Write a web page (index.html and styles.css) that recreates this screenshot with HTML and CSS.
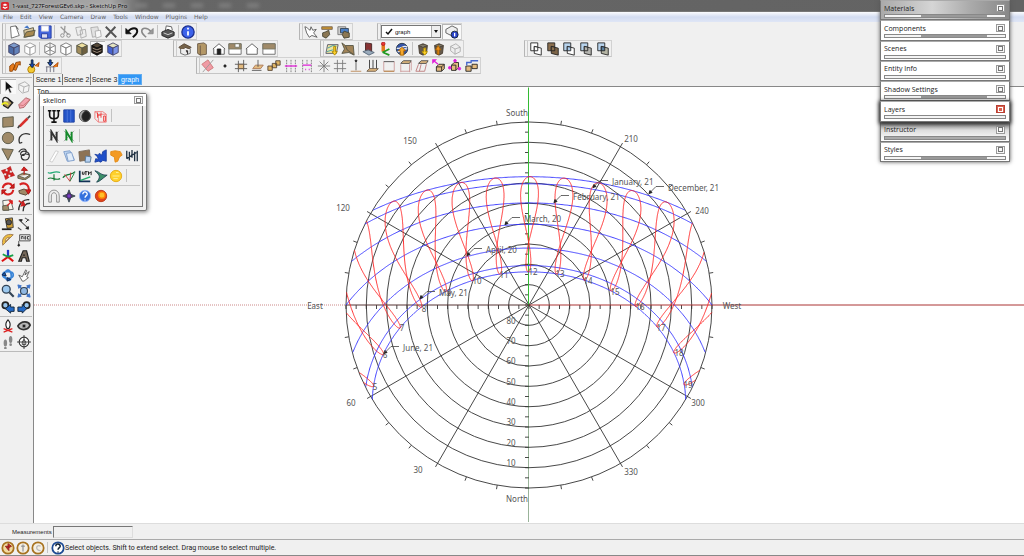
FILE: index.html
```html
<!DOCTYPE html>
<html lang="en">
<head>
<meta charset="utf-8">
<title>1-vast_727ForestGEv6.skp - SketchUp Pro</title>
<link rel="stylesheet" href="styles.css">
</head>
<body>
<div class="app">
  <header class="titlebar">
    <svg class="logo" viewBox="0 0 16 16"><rect width="16" height="16" rx="3" fill="#d8272c"/><path d="M3 6l5-3 5 3-5 2zM5 9l3 2 5-2v2l-5 3-5-3z" fill="#fff"/></svg>
    <h1>1-vast_727ForestGEv6.skp - SketchUp Pro</h1>
    <span class="smudge"></span><span class="smudge"></span><span class="smudge"></span><span class="smudge"></span><span class="smudge"></span>
  </header>
  <nav class="menu">
    <button>File</button><button>Edit</button><button>View</button><button>Camera</button><button>Draw</button><button>Tools</button><button>Window</button><button>Plugins</button><button>Help</button>
  </nav>
  <div class="toolbars">
    <div class="row">
      <div class="bar w-195" data-tools="new open save | cut copy paste delete | undo redo | print | info"></div>
      <div class="bar after-102 w-54" data-tools="hand paintcomp swapcomp"></div>
      <div class="bar after-24 layerbar w-85">
        <div class="combo">
          <svg class="tick" viewBox="0 0 13 11"><path d="M4 6l2 2 4-5" fill="none" stroke="#111" stroke-width="1.500"/></svg>
          <select aria-label="Layer"><option>graph</option></select>
          <span class="drop"></span>
        </div>
        <div class="tools" data-tools="layerinfo*"></div>
      </div>
    </div>
    <div class="row">
      <div class="bar w-120" data-tools="xray backedge | wire hidden shaded textured* mono"></div>
      <div class="bar after-51 w-105" data-tools="iso top front right back left"></div>
      <div class="bar after-42 w-144" data-tools="addloc terrain | photo street earth | getmodel sharemodel sharecomp"></div>
      <div class="bar after-60 w-88" data-tools="outer intersect union subtract trim"></div>
    </div>
    <div class="row">
      <div class="bar w-60" data-tools="plugA plugB plugC"></div>
      <div class="bar after-138 w-285" data-tools="erase dot cross plane boxes dashes dims star hash pin pins frame cage slant boxarrow boxdots steps"></div>
    </div>
  </div>
  <div class="middle">
    <aside class="side">
      <div class="pair" data-tools="select* component bucket rubber"></div>
      <div class="pair" data-tools="rect pencil circle arc poly freehand"></div>
      <div class="pair" data-tools="move push rotate follow scale offset"></div>
      <div class="pair" data-tools="tape dimension protractor textlabel axes text3d"></div>
      <div class="pair" data-tools="orbit pan zoom extents prev next"></div>
      <div class="pair" data-tools="camera look walk section"></div>
    </aside>
    <div class="work">
      <nav class="tabs">
        <button>Scene 1</button><button>Scene 2</button><button>Scene 3</button><button class="active">graph</button>
      </nav>
      <main class="canvas">
        <span class="viewname">Top</span>
        <svg class="chart" id="chart" viewBox="34 88 990 435" role="img" aria-label="Sun path diagram"></svg>
        <section class="palette skelion">
          <div class="ptitle"><h2>skelion</h2><button class="close" aria-label="Close"></button></div>
          <div class="grid">
            <div class="line" data-tools="psi panel moon hd |"></div>
            <div class="line" data-tools="north northg |"></div>
            <div class="line" data-tools="blank sheets roof mapblue africa bars"></div>
            <div class="line" data-tools="wave profile utm wing sun |"></div>
            <div class="line" data-tools="arch compass help firefox"></div>
          </div>
        </section>
      </main>
    </div>
  </div>
  <div class="measure">
    <label for="vcb">Measurements</label><input id="vcb" type="text">
  </div>
  <footer class="status">
    <div class="tools" data-tools="geo credit claim | helpring"></div>
    <span>Select objects. Shift to extend select. Drag mouse to select multiple.</span>
  </footer>
</div>
<div class="trays">
  <section class="tray glass"><h2>Materials</h2><button class="close" aria-label="Close Materials"></button><div class="slot part"></div></section>
  <section class="tray"><h2>Components</h2><button class="close" aria-label="Close Components"></button><div class="slot part"></div></section>
  <section class="tray"><h2>Scenes</h2><button class="close" aria-label="Close Scenes"></button><div class="slot"></div></section>
  <section class="tray"><h2>Entity Info</h2><button class="close" aria-label="Close Entity Info"></button><div class="slot"></div></section>
  <section class="tray"><h2>Shadow Settings</h2><button class="close" aria-label="Close Shadow Settings"></button><div class="slot part"></div></section>
  <section class="tray current"><h2>Layers</h2><button class="close" aria-label="Close Layers"></button><div class="slot"></div></section>
  <section class="tray shaded"><h2>Instructor</h2><button class="close" aria-label="Close Instructor"></button><div class="slot full"></div></section>
  <section class="tray"><h2>Styles</h2><button class="close" aria-label="Close Styles"></button><div class="slot part"></div></section>
</div>
<script src="app.js"></script>
</body>
</html>
```
FILE: styles.css
```css
* { box-sizing: border-box; }
html, body { height: 100%; }
body { margin: 0; font-family: "Open Sans", "Noto Sans", sans-serif; font-size: 6px; color: #222; overflow: hidden; }
h1, h2 { margin: 0; font-weight: 400; }
button { margin: 0; padding: 0; border: 0; background: none; font: inherit; color: inherit; }
.app { display: flex; flex-direction: column; height: 100%; background: #f0f0f0; }

.titlebar { display: flex; align-items: center; height: 12px; padding-left: 1px; background: linear-gradient(90deg, #999 0, #a6a6a6 110px, #666 142px, #636363); border-bottom: 1px solid #777; }
.titlebar h1 { margin: 0 8px 0 3px; font-size: 6px; line-height: 10px; color: #000; white-space: nowrap; text-shadow: 0 0 3px #ddd; }
.logo { width: 8px; height: 8px; }
.smudge { width: 12px; height: 3px; margin-right: 16px; background: #8b8b8b; filter: blur(2px); }
.menu { display: flex; gap: 7px; height: 10px; padding-left: 3px; background: linear-gradient(#fbfcfe, #d3dcf1 50%, #dfe6f6); color: #636363; font-family: "DejaVu Sans", sans-serif; font-size: 6px; line-height: 10px; }

.toolbars { padding: 1px 0 0 2px; }
.row { display: flex; height: 17px; }
.bar { display: flex; align-items: center; height: 17px; padding-left: 3px; border: 1px solid #d2d2d2; border-left-color: #b5b5b5; border-bottom-color: #c5c5c5; box-shadow: inset 2px 0 #f0f0f0, inset 3px 0 #ccc; }
.w-54 { width: 54px; } .w-60 { width: 60px; } .w-85 { width: 85px; } .w-88 { width: 88px; }
.w-105 { width: 105px; } .w-120 { width: 120px; } .w-144 { width: 144px; } .w-195 { width: 195px; } .w-285 { width: 285px; }
.after-24 { margin-left: 24px; } .after-42 { margin-left: 42px; } .after-51 { margin-left: 51px; }
.after-60 { margin-left: 60px; } .after-102 { margin-left: 102px; } .after-138 { margin-left: 134px; }
.tool { display: flex; flex: 1 1 0; align-items: center; justify-content: center; height: 15px; }
.tool svg { width: 14px; height: 14px; flex: none; }
.tool.on { background: #f9f9f9; box-shadow: inset 1px 1px #b5b5b5; }
.sep { width: 1px; height: 13px; margin: 0 2px; background: #c3c3c3; }
.combo { display: flex; align-items: center; width: 60px; height: 13px; border: 1px solid #777; background: #fff; }
.tick { width: 13px; height: 11px; }
.combo select { flex: 1; height: 11px; padding: 0; border: 0; appearance: none; background: #fff; font: 6px "Liberation Sans", sans-serif; color: #111; }
.drop { width: 9px; height: 11px; background: #eee; border-left: 1px solid #aaa; display: grid; place-items: center; }
.drop::after { content: ""; border: 2px solid transparent; border-top: 3px solid #111; border-bottom: 0; }
.layerbar .tools { display: flex; flex: 1; margin-left: 1px; }

.middle { display: flex; flex: 1; min-height: 0; }
.side { width: 34px; padding-top: 3px; border-right: 1px solid #888; }
.pair { display: grid; grid-template-columns: 16px 16px; grid-auto-rows: 16px; padding: 1px 0; margin-right: 1px; border-bottom: 1px solid #bbb; }
.side .pair:first-child { border-top: 1px solid #bbb; }
.work { display: flex; flex: 1; flex-direction: column; min-width: 0; }
.tabs { display: flex; height: 12px; padding-left: 1px; font: 7px "Liberation Sans", sans-serif; }
.tabs button { width: 28px; height: 11px; border-right: 1px solid #777; line-height: 10px; }
.tabs .active { width: 24px; margin-left: -1px; background: #3297f5; border: 1px solid #62acf0; color: #fff; line-height: 8px; }
.canvas { position: relative; flex: 1; min-height: 0; background: #fff; border-top: 1px solid #888; }
.chart { display: block; width: 100%; height: 100%; }
.chart text { font: 8px "Noto Sans", sans-serif; fill: #555; text-anchor: middle; dominant-baseline: central; }
.chart .note { text-anchor: start; }
.viewname { position: absolute; left: 3px; top: 0; font: 7px "Noto Sans", sans-serif; }

.palette { position: absolute; left: 5px; top: 6px; width: 108px; background: #f0f0f0; border: 1px solid #777; border-radius: 2px; box-shadow: 1px 1px 4px #777; padding: 0 3px 3px; }
.ptitle { display: flex; align-items: center; justify-content: space-between; height: 12px; margin: 0 -3px; padding: 0 3px; background: #fff; }
.palette h2, .tray h2 { font-size: 7px; line-height: 11px; }
.close { width: 9px; height: 8px; border: 1px solid #9a9a9a; background: #f8f8f8; display: grid; place-items: center; }
.close::after { content: ""; width: 3px; height: 3px; border: 1px solid #777; }
.grid { border: 1px solid #777; border-top-width: 0; padding: 0 2px; }
.line { display: grid; grid-template-columns: repeat(6, 1fr); align-items: center; height: 20px; border-bottom: 1px solid #c5c5c5; }
.line:last-child { border: 0; }
.palette .tool svg { width: 14px; height: 14px; }

.measure { display: flex; align-items: center; height: 17px; padding-left: 12px; border-bottom: 1px solid #aaa; border-top: 1px solid #ddd; }
.measure label { width: 41px; font-family: "Liberation Sans", sans-serif; }
.measure input { width: 80px; height: 12px; padding: 0; border: 1px solid #ddd; border-top: 1px solid #777; border-left: 1px solid #777; background: #f0f0f0; font-size: 6px; }
.status { display: flex; align-items: center; height: 16px; border-bottom: 1px solid #888; }
.status .tools { display: flex; width: 65px; align-items: center; }
.status span { font: 7px Roboto, sans-serif; }
.status .sep { height: 11px; }

.trays { position: absolute; top: 0; right: 14px; width: 130px; height: 162px; display: flex; flex-direction: column; box-shadow: 0 0 4px #555; }
.tray { display: grid; flex: 1; min-height: 0; grid-template-columns: 1fr 10px; grid-template-rows: 12px 4px; align-content: center; align-items: center; padding: 0 3px; background: #fff; border: 1px solid #777; border-top-color: #aaa; }
.slot { grid-column: 1 / 3; height: 4px; border: 1px solid #888; background: #f4f4f4; }
.part { background: linear-gradient(90deg, #f4f4f4 30%, #999 30%, #999 85%, #f4f4f4 85%); }
.full { background: #aaa; }
.glass { background: linear-gradient(90deg, #aaa, #d5d5d5 40%, #aaa 70%, #888); }
.shaded { background: linear-gradient(#888, #ddd 40%, #fff); }
.current { z-index: 1; box-shadow: 0 1px 4px 1px #222; }
.current .close { background: #d9614f; border-color: #b94034; }
.current .close::after { border-color: #fff; }
```
FILE: app.js
```javascript
const T = '#a08a68', K = '#222', B = '#3f74c8', M = '#e020d8';
const p = (d, fill = 'none', stroke = K, w = 1) => `<path d="${d}" fill="${fill}" stroke="${stroke}" stroke-width="${w}"/>`;
const c = (x, y, r, fill = 'none', stroke = K, w = 1) => `<circle cx="${x}" cy="${y}" r="${r}" fill="${fill}" stroke="${stroke}" stroke-width="${w}"/>`;
const cube = (top, left, right, s = K) => p('M8 1l6 3-6 3-6-3z', top, s) + p('M2 4l6 3v8l-6-3z', left, s) + p('M14 4l-6 3v8l6-3z', right, s);
const house = (w, r) => p('M2 7v7h12V7', w, '#555') + p('M1 8l7-6 7 6', r, '#555');
const lens = '<circle cx="6" cy="6" r="4.5" fill="#9cc8ee" stroke="#345" stroke-width="1.5"/>' + p('M9.5 9.5l5 5', 'none', '#345', 2.5);
const solids = (a, b, m) => p('M2 1h8v9H2z', a) + p('M6 5l8 2v8l-8-2z', b) + p('M6 5l4 1v4H6z', m);
const cup = (y) => p('M3 4l5-2 5 2-1 9-4 2-4-2z', '#66594a', '#443a30') + p('M3 4l5 2 5-2', '#998', '#443a30') + y;
const star = 'M8 0l3 4H9v3h3V5l4 3-4 3V9H9v3h2l-3 4-3-4h2V9H4v2L0 8l4-3v2h3V4H5z';

const ICONS = {
  new: p('M4 2l6-1 4 11-9 3z', '#fff', '#666') + p('M10 1l3 4', 'none', '#444'),
  open: p('M2 6l11-3 1 9-11 2z', '#d9c7a0', '#554') + p('M2 14l3-6 10-2-2 6z', '#a8894f', '#554') + p('M3 3l3-2 2 3', B, B),
  save: p('M1 1h14v14H3l-2-2z', '#4466dd', '#2038a0') + p('M4 1h8v6H4z', '#fff', '#ccd') + p('M4 10h7v5H4z', '#dde', '#2038a0'),
  cut: p('M3 2l9 9M8 1l-1 9', 'none', '#999', 1.5) + c(5, 12, 2, 'none', '#888') + c(12, 12, 2, 'none', '#888'),
  copy: p('M2 3l6-1 2 8-6 2zM7 6l6-1 1 8-6 2z', '#eee', '#aaa'),
  paste: p('M2 3l8-1 2 10-8 2z', '#e2e2e2', '#aaa') + p('M7 7l6-1 1 7-6 2z', '#f8f8f8', '#aaa'),
  delete: p('M2 2l12 12M13 2L2 14', 'none', '#555', 2.2),
  undo: p('M3 8c5-6 11-5 11-1 0 3-3 5-5 7', 'none', '#111', 2.2) + p('M1 4v6h6z', '#111', '#111'),
  redo: p('M13 8c-5-6-11-5-11-1 0 3 3 5 5 7', 'none', '#888', 1.8) + p('M15 4v6H9z', '#999', '#888'),
  print: p('M5 6l1-5 6 1 1 4', '#fff', '#555') + p('M1 8l7-3 7 3v4l-7 3-7-3z', '#555', '#222') + p('M3 9l5 2 5-2', 'none', '#ddd'),
  info: c(8, 8, 7, '#3d62ea', '#1b2f90', 1.5) + p('M8 7v5M8 3v2', 'none', '#fff', 2),
  hand: p('M1 2c2 0 4 3 6 4L8 2l2 4 4-1-3 4 4 5-6-2-3 2-3-5z', '#fff', '#555'),
  paintcomp: p('M2 2h12v3H2z', '#c5912f', '#765') + p('M10 6l-4 2-3 1v4l4 2 4-4z', '#8b7753', '#443'),
  swapcomp: p('M1 2h9v9H1z', '#ccc', '#777') + p('M4 4h9v5H4z', '#4a7fc6', '#345') + p('M8 7l6 2v5l-6 1-2-4z', '#8b7753', '#443'),
  layerinfo: p('M1 5l7-4 6 3v4l-7 4-6-3z', '#eee', '#555') + c(11, 11, 4, '#2b45cc', '#123') + p('M11 9v4', 'none', '#fff', 1.5),
  xray: cube('#7d9bcc', '#4d6da8', '#6383bb', '#446'), backedge: cube('#fff', '#fff', '#fff', '#999'),
  wire: p('M8 1l6 3v8l-6 3-6-3V4zM2 4l6 3 6-3M8 7v8M8 1v8M2 12l6-3 6 3', '#fff', '#777'),
  hidden: cube('#fff', '#fff', '#fff', '#777'), shaded: cube('#eee0a0', '#a08c5c', '#6e6040', '#554'),
  textured: cube('#554838', '#221a12', '#221a12', '#111') + p('M3 7l5 2 5-2M3 10l5 2 5-2', 'none', '#a98', 1),
  mono: cube('#e3e3c0', '#4562d0', '#7c94e8', '#446'),
  iso: p('M1 6l6-4 8 4-2 2-5-2-3 4z', '#76644b', '#543') + p('M3 8v5l5 2 6-2V8', '#eee', '#666') + p('M9 10h2v4', '#433'),
  top: p('M3 2l7-1 3 2v11l-7 1-3-2z', '#b39766', '#654') + p('M6 4v11', 'none', '#654'),
  front: house('#fff', '#fff') + p('M6 14V8h4v6z', '#222'), right: p('M1 2h14v12H1z', '#fff', '#666') + p('M1 2h14v6H1z', T, '#776') + p('M8 2h5v4H8z', '#fff', '#776'),
  back: house('#fff', '#fff'), left: p('M1 2h14v12H1z', '#fff', '#666') + p('M1 2h14v6H1z', T, '#776'),
  addloc: p('M3 3h12l-2 10H1z', '#eee4a0', '#556') + p('M3 7l6-3 4 1M2 11l7-2', 'none', '#39a') + p('M10 5v6h-2l3 4 3-4h-2V5z', '#ffd02a', '#a80'),
  terrain: p('M1 1l4 3 9 0 1 11-6-3-8 1 3-5z', '#a08358', '#554') + p('M5 4l2 5 7 5', 'none', '#554'),
  photo: p('M4 1l7 1v9l-7-1z', '#833', '#422') + p('M1 11l6-2 7 3-6 3z', '#9ab', '#567'), street: p('M6 2v9', 'none', '#e27a1c', 4) + p('M6 12l7 3M5 12l8-4', 'none', '#292', 2) + c(6, 2, 2, '#e33', '#a22'),
  earth: c(8, 8, 6.5, '#3554a8', '#234') + p('M2 7c5 2 8-5 12-1M3 11c5 1 6-5 11-3', 'none', '#eee', 1.5) + p('M6 15v-5H4l4-4 4 4h-2v5z', '#f6a72a', '#a60'),
  getmodel: cup(p('M9 7v4H7l3 4 3-4h-2V7z', '#ffd02a', '#b90')), sharemodel: cup(p('M6 14V9H4l3-5 3 5H8v5z', '#f0921f', '#a60')), sharecomp: p('M3 5l6-3 5 4v5l-6 3-5-4zM3 5l5 3 6-2M8 8v6', '#eee', '#aaa'),
  outer: solids('#fff', '#fff', '#fff'), intersect: solids('#8b6f4e', '#7d6548', '#8b6f4e'), union: solids('#b8d4ee', '#fff', '#a8c9e8'), subtract: solids('#b8d4ee', '#b5b5b0', '#b5b5b0'), trim: solids('#b8d4ee', '#b5b5a5', '#5a7fa0'),
  plugA: p('M2 8l4-3 2 3-3 6H2zM9 4l5-1v4l-2-1-3 7-3-1z', '#e87b1c', '#8c4408'),
  plugB: c(6, 12, 4, '#f3ca34', '#a70') + p('M6 1v5H4l3 4 3-4H8V1z', '#1848b8', '#123') + p('M10 8l5-4-1 5', '#e87b1c', '#a40'), plugC: p('M2 15V9M6 15V9M10 15V9M1 9h11', 'none', '#667') + p('M5 1v3H3l3 4 3-4H7V1z', '#1848b8', '#123') + p('M9 9l6-5-1 5', '#e87b1c', '#a40'),
  erase: p('M1 6l7-5 6 9-6 4z', '#f09aa4', '#c77') + p('M2 15L14 1', 'none', '#999'), dot: c(8, 8, 1.3, K),
  cross: p('M1 6h14M1 11h14M5 2v13M11 1v13', 'none', '#555') + p('M5 6h6v5H5z', '#e3bb80', '#654'), plane: p('M2 11l3-4h9l-3 4z', '#e3bb80', '#a75') + p('M8 1v8M1 13h11', 'none', '#555'),
  boxes: p('M1 8h5v5H1zM6 5h5v5H6zM10 2h5v5h-5z', '#e0b565', '#543'), dashes: p('M3 1v14M8 1v14M13 1v14', 'none', '#777').replace('/>', ' stroke-dasharray="2 1"/>') + p('M1 8h14', 'none', M, 1.5),
  dims: p('M3 1v14M8 1v6M13 1v14', 'none', '#777').replace('/>', ' stroke-dasharray="2 1"/>') + p('M3 7h10M6 12h1M10 12h1', 'none', M, 1.5), star: p('M8 1v14M1 8h14M3 3l10 10M13 3L3 13', 'none', '#777'),
  hash: p('M5 1v14M11 1v14M1 5h14M1 11h14', 'none', '#777'), pin: p('M8 2v11', 'none', '#555') + c(8, 2, 1, K) + p('M2 14h12', 'none', '#b85'),
  pins: p('M4 1v10M8 1v10M12 1v10', 'none', '#333') + p('M1 14l3-3h10l-3 3z', '#e3bb80', '#654'), frame: p('M2 3v11M14 3v11', 'none', '#c99') + p('M2 3h12', 'none', '#444') + p('M2 14h12', 'none', '#b85', 1.5),
  cage: p('M2 5l3-3h9l-2 3z', '#e3bb80', '#444') + p('M2 6v9M12 6v9M14 3v10M2 14h11', 'none', '#c99'), slant: p('M4 5l3-3h8l-2 3H4z', '#e3bb80', '#444') + p('M4 6L1 14h10l2-8M7 6l-2 8', 'none', '#b77'),
  boxarrow: p('M5 9l3-3h6v5l-3 3H5z', '#e3bb80') + p('M5 9h6v5M11 9l3-3', 'none') + p('M2 2l5 4M1 4V1h3z', M, M, 1.5), boxdots: p('M4 7l3-3h5v6l-3 3H4z', '#e3bb80') + c(8, 2, 1.5, M, M) + c(2, 10, 1.5, M, M) + c(13, 11, 1.5, M, M) + p('M4 7h5v6', 'none'),
  steps: p('M1 8h6v6H1zM8 6h6v5H8z', '#e3bb80') + p('M2 7V4h5V2h8', 'none', '#46c', 1.5),
  select: p('M5 1v12l3-3 2 5 2-1-2-5h4z', '#111', '#eee', .7), component: p('M2 5l7-3 5 4-1 7-7 2-4-4zM2 5l6 3 6-2M8 8l-1 6', '#f4f4f4', '#aaa'),
  bucket: p('M2 6l6-3 5 5-5 6-5-3z', '#b39a60', '#222', 1.5) + p('M2 6c0-7 6-5 8 0M9 4l5 4', '#eee', '#222', 1.5) + p('M1 10c2-3 6-3 7 0', 'none', '#ee2', 2), rubber: p('M2 10l8-8 5 2-7 9-5 1z', '#f4a4b0', '#a66') + p('M2 10l5 1 8-7', 'none', '#c77'),
  rect: p('M2 3l12-1v11L2 14z', T, '#554'), pencil: p('M3 13L12 4', 'none', '#d8302c', 3) + p('M12 4l3-3M1 15l2-3', 'none', '#444', 2), circle: c(8, 8, 6.5, T, '#554'),
  arc: p('M3 14C0 5 8 1 15 4M3 14l3-1', 'none', '#333', 1.5), poly: p('M1 2l13 1-6 12z', T, '#554'), freehand: p('M2 6c3-6 11-4 8 1s-8 2-5-1 10 0 9 5-8 5-9 1 5-5 9-3', 'none', '#333', 1.3),
  move: `<g transform="rotate(20 8 8)">${p(star, '#d62222', '#a11', .6)}</g>`, push: p('M1 11l6-3 8 2-6 4zM1 11v3l8 2 6-4v-2', T, '#554') + p('M8 10V5H5l3-4 4 4H9', '#d62222', '#a11'),
  rotate: p('M2 7c1-6 9-7 11-2M14 9c-1 6-9 7-11 2', 'none', '#d62222', 2.4) + p('M15 2v5h-5zM1 14V9h5z', '#d62222', '#a11'), follow: p('M2 10l6-2 7 3-5 4-7-2z', T, '#543') + p('M3 3c7-4 12 2 10 8', 'none', '#d62222', 2.4) + p('M10 9h6l-3 5z', '#d62222', '#a11'),
  scale: p('M2 3l9-1 3 11-11 1z', '#f7f4ec', '#555') + p('M2 9l6-1 1 6H2z', T, '#554') + p('M7 9l5-5', 'none', '#d62222', 1.5) + p('M9 3h4v4z', '#d62222', '#d22'), offset: p('M2 14C2 6 8 1 14 2M7 15c0-6 3-9 8-9', 'none', '#333', 1.6) + p('M5 9l4-1-2-4zM2 3l5 4', '#d62222', '#c22', 1.5),
  tape: p('M5 2l8-1 1 11-7 1z', '#d0a037', '#333') + c(9, 6, 3, '#555') + p('M1 14h11', 'none', '#222', 2), dimension: p('M2 3l11 10M1 12l4 3M9 1l5 3', 'none', '#555', 1.2) + p('M3 3l3 0-1 2zM13 11v3l-3-1zM10 6l3-3', K),
  protractor: p('M2 14C0 5 6 0 14 2z', '#edbd3f', '#975') + p('M5 10c0-4 2-5 5-5z', '#fff6d5', '#975'), textlabel: p('M3 2h12v7H3zM2 9v5', '#eee', '#444') + p('M5 4v3M5 4h2v3M9 4v3h1V4zM14 4h-2v3h2', 'none', '#333') + c(2, 14, 1, K),
  axes: p('M8 9V1', 'none', '#2238c5', 2.6) + p('M8 9l-7 5M8 9l6 5', 'none', '#d11', 2.4) + p('M8 9L2 6M8 9l6-2', 'none', '#16a048', 2), text3d: p('M2 14L7 2h4l3 12h-3l-1-4H6l-1 4zM7 7h2', '#76685a', '#222', 1.3),
  orbit: p('M2 8c0-5 12-5 12 0s-12 5-12 0M8 2c-5 2-5 10 0 12s5-10 0-12', 'none', '#3b86d8', 2) + p('M1 8l3-3 2 4zM11 13l-4 2 0-4z', '#1c5db0', '#124'), pan: p('M2 8l4 2 4-8 1 1-2 5 5-4-3 6 2 1-5 4H6z', '#fff', '#555'),
  zoom: lens, extents: p('M1 1l4 1-3 3zM15 1l-4 1 3 3zM1 15l1-4 3 3zM15 15l-1-4-3 3z', B, B) + p('M2 2l12 12M14 2L2 14', 'none', B, 1.5) + c(8, 8, 4, '#8fb7e2', '#345', 1.3),
  prev: c(5, 6, 3.5, '#9cc8ee', '#222', 2) + p('M5 10l6-5v3h4v5h-4v2z', '#266bc7', '#123'), next: c(11, 6, 3.5, '#9cc8ee', '#222', 2) + p('M11 10L6 5v3H1v5h5v2z', '#266bc7', '#123'),
  camera: p('M8 1c-2 2-3 5-2 8l1 2h2l1-2c1-3 0-6-2-8z', '#fff', '#222', 1.3) + p('M3 11l10 4M13 11L3 15', 'none', '#d22', 1.5), look: p('M1 8c4-6 12-6 14-1-3 7-12 6-14 1z', '#bbb', '#333', 2) + c(8, 8, 2, '#222', '#888'),
  walk: '<ellipse cx="5" cy="9" rx="2" ry="4" fill="#888"/><ellipse cx="11" cy="5" rx="2" ry="4" fill="#888"/><circle cx="5" cy="15" r="1.5" fill="#888"/><circle cx="11" cy="11" r="1.5" fill="#888"/>',
  section: c(8, 8, 5.5, '#fff', '#333', 1.3) + p('M8 0v16M0 8h16', 'none', '#333') + p('M6 8l2-3 2 3v3H6z', 'none', '#333'),
  psi: p('M1 2h4M6 2h4M11 2h4M3 2v5c0 3 2 4 5 4s5-1 5-4V2M8 2v13M5 15h6', 'none', '#111', 1.8), panel: p('M2 1h12v14H2z', '#2455c8', '#1b3f9e') + p('M6 1v14M10 1v14', 'none', '#4f78dc'),
  moon: c(8, 8, 6.5, '#aaa', '#555') + p('M9 2c6 1 7 10 0 12-5 0-7-8 0-12z', '#222', '#333'), hd: p('M1 3h9l4 3v9H5l-4-4zM1 3l4 3h9M5 6v9', 'none', '#e77') + p('M4 4v6M8 4v6M4 7h4M11 8v6h2V8z', 'none', '#e33', 1),
  north: p('M2 2l12 12M14 2L2 14', 'none', '#bbb') + p('M5 13V3l6 10V3', 'none', '#333', 2.2), northg: p('M2 2l12 12M14 2L2 14', 'none', '#aaa') + p('M5 13V3l6 10V3', 'none', '#168a2c', 2.2),
  blank: p('M3 14L10 2l3 1-7 12z', '#fff', '#ccc'), sheets: p('M2 3l7-1 5 10-8 2z', '#bcd4f0', '#7a9ac8') + p('M5 5l6-1 3 9-7 1z', '#e2edf9', '#7a9ac8'),
  roof: p('M1 3l12-2 1 11-12 2z', '#8d7354', '#765') + p('M9 8l6 1-1 6H8z', '#b8d3f3', '#579'), mapblue: p('M14 1v13l-4-1-2 2-3-1-4 1 1-4 3 1-1-3-3-3 4 1 1-2 3 2 1-4z', '#1f4fc9', '#1b3fa0'),
  africa: p('M2 3l5-1 6 1 2 4-3 2-2 5-3 1-1-6-4-2z', '#f39a23', '#e38a13'), bars: p('M2 2v9M5 3v10M8 1v9M11 3v11M14 2v12M2 11l11-7', 'none', '#234', 1.5),
  wave: p('M1 4c4 3 6-3 14 0', 'none', '#2a7', 1.4) + p('M1 11c5-3 8 3 14 0M8 6v7', 'none', '#173', 1.3), profile: p('M1 10c4-6 10-2 14-7', 'none', '#173', 1.5) + p('M3 6l6 8 1-10', 'none', '#c33') + p('M9 14l5-9', 'none', '#173'),
  utm: p('M2 2v12h12', 'none', '#135', 2) + p('M3 13l11-4', 'none', '#2a6', 1.5) + p('M5 3v3h2V3M8 3h3M9 3v4M12 7V3l1 2 2-2v4', 'none', '#111'), wing: p('M1 2c7 2 6 5 14 5-7 5-8 7-12 8 4-5 5-7-2-13z', '#3b8f68', '#245'),
  sun: c(8, 8, 6.5, '#ffd02a', '#e3a810') + p('M4 8h8M5 11h5M8 4h3', 'none', '#fff2a0'), arch: p('M2 15V8c0-9 12-9 12 0v7h-3V8c0-5-6-5-6 0v7z', '#eee', '#888'),
  compass: p('M8 1l2 5 5 2-5 2-2 5-2-5-5-2 5-2z', '#555', '#345') + c(8, 8, 2.5, '#7a40c8', '#426'), help: c(8, 8, 6.5, '#3470dd', '#9bf', 1) + p('M5.500 6c0-4 5-3 5 0 0 2-2 1-2.500 4M8 12v1', 'none', '#fff', 1.5),
  firefox: c(8, 8, 6.5, '#e1431b', '#b31') + c(9, 7, 3.5, '#ffc02a', '#f80', 1.5),
  geo: c(8, 8, 6.5, '#f2dba0', '#a87320', 2) + p('M8 8V3l4 3zM5 6h4v5z', '#d22', '#822'), credit: c(8, 8, 6.5, '#f4efe3', '#a87320', 2) + p('M8 4v8M6 6h4', 'none', '#999', 1.5), claim: c(8, 8, 6.5, '#f4efe3', '#a87320', 2) + p('M11 6c-5-3-7 5 0 5', 'none', '#bbb', 1.5),
  helpring: c(8, 8, 6.5, '#fff', '#1d4a94', 2) + p('M5.500 6c0-4 5-3 5 0 0 2-2 1-2.500 4M8 12v1', 'none', '#123', 1.7)
};

document.querySelectorAll('[data-tools]').forEach(host => {
  host.innerHTML = host.dataset.tools.split(' ').map(t => {
    if (t === '|') return '<span class="sep"></span>';
    const on = t.endsWith('*');
    const name = on ? t.slice(0, -1) : t;
    return `<button class="tool${on ? ' on' : ''}" aria-label="${name}"><svg viewBox="0 0 16 16">${ICONS[name]}</svg></button>`;
  }).join('');
});

/* Sun path diagram: equidistant polar projection, south at the top */
const CX = 529, CY = 305.5, R = 183, LAT = 39.7, rad = Math.PI / 180;
function sunPoint(decl, hour) {
  const f = LAT * rad, d = decl * rad, h = hour * rad;
  const up = Math.sin(f) * Math.sin(d) + Math.cos(f) * Math.cos(d) * Math.cos(h);
  if (up < 0) return null;
  const west = Math.cos(d) * Math.sin(h);
  const south = Math.sin(f) * Math.cos(d) * Math.cos(h) - Math.cos(f) * Math.sin(d);
  const r = Math.acos(up) / rad / 90 * R, len = Math.hypot(west, south) || 1;
  return [CX + r * west / len, CY - r * south / len];
}
function track(points) {
  let d = '', pen = 'M';
  for (const q of points) {
    if (!q) { pen = 'M'; continue; }
    d += pen + q[0].toFixed(1) + ' ' + q[1].toFixed(1);
    pen = 'L';
  }
  return d;
}
const polar = (deg, r) => [CX + r * Math.cos(deg * rad), CY + r * Math.sin(deg * rad)].map(v => v.toFixed(1)).join(' ');
let out = '';
for (let i = 1; i <= 9; i++) out += c(CX, CY, (R * i / 9).toFixed(1), 'none', '#333', .9);
let marks = '';
for (let a = 0; a < 360; a += 10) marks += a % 90 === 0 ? '' : a % 30 === 0 ? `M${CX} ${CY}L${polar(a, 187)}` : `M${polar(a, R)}L${polar(a, R + 4)}`;
for (let i = -18; i <= 18; i++) {
  const s = R * i / 18;
  marks += `M${CX + s} ${CY}v4M${CX} ${CY + s}h-4`;
}
out += p(marks, 'none', '#333', .9);
out += p('M34 305.500H346', 'none', '#c88', 1).replace('/>', ' stroke-dasharray="1 1"/>') + p('M346 305.500H529', 'none', '#533', 1) + p('M529 305.500H1024', 'none', '#a33', 1);
out += p('M528.500 88V305', 'none', '#3b3', 1) + p('M528.500 305V523', 'none', '#363', 1).replace('/>', ' stroke-dasharray="1 1"/>');
for (const decl of [-23.4, -19.9, -10.5, 0, 11.7, 20.3, 23.4]) {
  const pts = [];
  for (let h = -125; h <= 125; h += .5) pts.push(sunPoint(decl, h));
  out += p(track(pts), 'none', '#3030ff', .9);
}
for (let hr = 4; hr <= 20; hr++) {
  const pts = [];
  for (let n = 0; n <= 365; n++) {
    const b = 2 * Math.PI * (n - 81) / 365;
    const eot = 9.87 * Math.sin(2 * b) - 7.53 * Math.cos(b) - 1.5 * Math.sin(b);
    pts.push(sunPoint(23.44 * Math.sin(b), 15 * (hr - 12) + eot / 4));
  }
  out += p(track(pts), 'none', '#ff2020', .9);
}
const notes = [['January, 21', 593, 188], ['December, 21', 649, 194], ['February, 21', 554, 203], ['March, 20', 505, 225], ['April, 20', 467, 256], ['May, 21', 420, 299], ['June, 21', 384, 354]];
for (const [t, x, y] of notes) out += p(`M${x} ${y}l7-7h8`, 'none', '#444', .8) + p(`M${x} ${y}l1-3 2 2z`, K) + `<text class="note" x="${x + 19}" y="${y - 6}">${t}</text>`;
const labels = [['South', 517, 113], ['North', 517, 499], ['East', 315, 306], ['West', 732, 306], [150, 410, 141], [120, 343, 208], [60, 351, 403], [30, 418, 470], [210, 631, 139], [240, 702, 211], [300, 698, 403], [330, 631, 472],
  [5, 375, 387], [6, 385, 355], [7, 402, 328], [8, 424, 309], [9, 449, 293], [10, 477, 281], [11, 504, 275], [12, 533, 272], [13, 560, 274], [14, 588, 281], [15, 615, 292], [16, 640, 307], [17, 661, 328], [18, 679, 353], [19, 688, 385]];
for (let i = 1; i <= 8; i++) labels.push([i * 10, 511, Math.round(463 - (i - 1) * 20.33)]);
for (const [t, x, y] of labels) out += `<text x="${x}" y="${y}">${t}</text>`;
document.getElementById('chart').innerHTML = out;
```
